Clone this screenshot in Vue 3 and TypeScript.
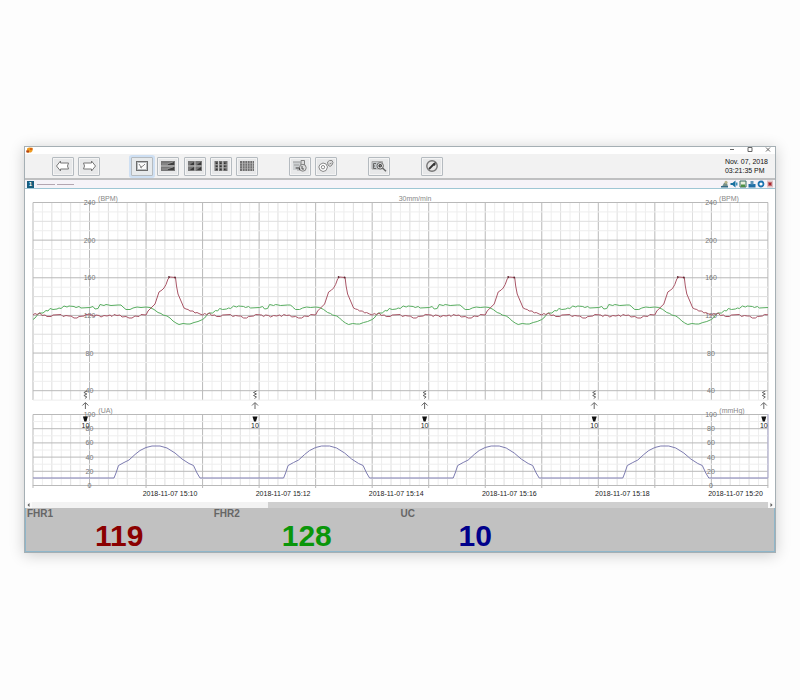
<script setup lang="ts">
type Point = [number, number]

const PERIOD = 169.6
const LEFT = 33
const RIGHT = 768
const MAJOR = 56.53

const tools = [
  { id: 'prev', label: 'Previous page', slot: 1 },
  { id: 'next', label: 'Next page', slot: 2 },
  { id: 'single', label: 'Single view', slot: 4 },
  { id: 'rows', label: 'Two views', slot: 5 },
  { id: 'quad', label: 'Four views', slot: 6 },
  { id: 'grid9', label: 'Nine views', slot: 7 },
  { id: 'grid16', label: 'Sixteen views', slot: 8 },
  { id: 'patient', label: 'Patients', slot: 10 },
  { id: 'settings', label: 'Settings', slot: 11 },
  { id: 'search', label: 'Search', slot: 13 },
  { id: 'tools', label: 'Service', slot: 15 },
]

const verticals = Array.from({ length: 79 }, (_, i) => ({
  x: LEFT + (i * MAJOR) / 6,
  kind: i % 6 === 0 ? 'major' : i % 2 === 0 ? 'mid' : 'minor',
})).filter((v) => v.x <= RIGHT + 1)
const majors = verticals.filter((v) => v.kind === 'major')

const fhrY = (v: number) => 202.5 + (240 - v) * 0.941
const ucY = (v: number) => 414.5 + (100 - v) * 0.71

const fhrLines = Array.from({ length: 22 }, (_, i) => 240 - i * 10).map((v) => ({
  y: fhrY(v),
  kind: v % 40 === 0 ? 'major' : v % 20 === 0 ? 'mid' : 'minor',
}))
const ucLines = Array.from({ length: 11 }, (_, i) => i * 10).map((v) => ({
  y: ucY(v),
  kind: v % 20 === 0 ? 'major' : 'minor',
}))

const fhrTicks = [240, 200, 160, 120, 80, 40]
const ucTicks = [100, 80, 60, 40, 20, 0]
const axes = [89.5, 711]
const times = ['15:10', '15:12', '15:14', '15:16', '15:18', '15:20']
const markers = [0, 1, 2, 3, 4].map((i) => 85.4 + i * PERIOD)

// One contraction cycle per array: x is the offset in the cycle, y the plot position.
const fhr1: Point[] = [
  [0, 315], [2, 313.5], [4, 314.5], [7, 313], [9, 315.5], [12, 315], [14, 316.5], [18, 316.5], [20, 315],
  [28, 314.5], [30, 316.5], [33, 315.5], [36, 316], [38, 316], [41, 318], [44, 318], [46, 316.5], [51, 316],
  [53, 314.5], [59, 315], [61, 316.5], [63, 315], [66, 315.5], [68, 317], [71, 315.5], [74, 316], [77, 315],
  [79, 316.5], [81, 314.5], [84, 315.5], [87, 315], [89, 317], [93, 316.5], [96, 318], [99, 318], [102, 316],
  [106, 316.5], [108, 314.5], [113, 315], [115, 311], [118, 308], [122, 304], [124, 298], [126, 292], [129, 290],
  [131, 288], [133, 284.5], [135, 279], [137, 277], [142.5, 277.5], [143.5, 286], [145, 294], [148, 301],
  [151, 308], [153, 309], [155, 309.5], [157, 311], [160, 311], [162, 313], [164, 312.5], [167, 314], [169.6, 315],
]
const fhr2: Point[] = [
  [0, 319.5], [2, 318], [4, 315.5], [6, 313], [10, 313], [13, 310.5], [15, 311], [17, 308.5], [20, 309.5],
  [24, 309], [26, 308], [28, 308.5], [31, 306], [34, 307], [36, 306], [41, 306.5], [43, 307.5], [46, 306.5],
  [48, 308], [57, 307.5], [60, 306.5], [62, 309], [65, 308.5], [67, 304.5], [71, 305.5], [73, 304.5], [78, 305.5],
  [85, 305], [88, 305], [90, 307], [93, 309.5], [97, 309.5], [100, 308], [104, 307], [108, 307.5], [113, 307],
  [117, 307.5], [121, 309.5], [125, 312.5], [128, 313.5], [130, 315], [134, 316], [137, 318], [140, 321],
  [143, 323], [146, 324.5], [150, 323.5], [154, 324], [157, 324], [161, 322.5], [165, 321.5], [169.6, 319.5],
]
const uc: Point[] = [
  [0, 478], [81, 478], [83, 473], [85.5, 465.5], [91, 462.5], [96, 460], [102, 454.5], [107, 450.5],
  [113, 447.5], [119, 446], [127, 446], [134, 448], [142, 453], [149, 459], [156, 463.5], [160.5, 465.5],
  [164, 473], [167, 478], [169.6, 478],
]

// Repeats a cycle across the plot and ends exactly on its right edge.
function trace(cycle: Point[]): string {
  const out: string[] = []
  let last: Point = [LEFT, cycle[0][1]]
  for (let n = 0; n < 5; n++) {
    for (const [dx, y] of cycle) {
      const x = LEFT + n * PERIOD + dx
      if (x > RIGHT) {
        const share = (RIGHT - last[0]) / (x - last[0])
        out.push(`${RIGHT},${(last[1] + (y - last[1]) * share).toFixed(1)}`)
        return out.join(' ')
      }
      out.push(`${x.toFixed(1)},${y}`)
      last = [x, y]
    }
  }
  return out.join(' ')
}

const readings = [
  { name: 'FHR1', value: 119, tone: 'red' },
  { name: 'FHR2', value: 128, tone: 'green' },
  { name: 'UC', value: 10, tone: 'blue' },
]
</script>

<template>
  <main class="page">
    <section class="window">
      <header class="titlebar">
        <svg class="logo" viewBox="0 0 7 6"><path d="M1 1.500 3 .5l3.500.3V4L5 5.500H1Z" fill="#ee9a20" /><path d="M0 3.500h3v2H.5Z" fill="#b34112" /><path d="M4 1h2.500v2H4Z" fill="#d86613" /></svg>
        <div class="controls">
          <button aria-label="Minimize"><svg viewBox="0 0 6 6"><path d="M1 2.500h4" /></svg></button>
          <button aria-label="Maximize"><svg viewBox="0 0 6 6"><path d="M1 .5h4v4H1Z" /></svg></button>
          <button aria-label="Close"><svg viewBox="0 0 6 6"><path d="m1 .5 4 4M5 .5l-4 4" /></svg></button>
        </div>
      </header>

      <div class="toolbar">
        <nav class="tools">
          <button v-for="t in tools" :key="t.id" class="tool" :class="[`slot-${t.slot}`, { active: t.id === 'single' }]" :aria-label="t.label">
            <svg viewBox="0 0 16 12">
              <path v-if="t.id === 'prev'" d="M1.500 6 5.500 1v2h8l-1 3 1 3h-8v2Z" fill="#fff" stroke="#777" />
              <path v-else-if="t.id === 'next'" d="M14.500 6 10.500 1v2h-8l1 3-1 3h8v2Z" fill="#fff" stroke="#777" />
              <g v-else-if="t.id === 'single'" fill="none" stroke="#6d6d6d">
                <rect x="2.500" y="1.500" width="11" height="9" fill="#b9bdbf" />
                <rect x="4" y="3" width="8" height="6" fill="#fafafa" stroke="none" />
                <path d="m5 4 2 3 2-1 2-2M6 7l2 1" stroke-width=".8" />
              </g>
              <g v-else-if="t.id === 'rows'">
                <path d="M1 1h14v10H1Z" fill="#777" /><path d="M1 6h14" stroke="#ddd" stroke-width=".8" />
                <path d="m8 4 6-2v3H8ZM8 9l6-2v3H8Z" fill="#3f3f3f" /><path d="M2 4h5l6-2M2 9h5l6-2" fill="none" stroke="#aaa" stroke-width=".6" />
              </g>
              <g v-else-if="t.id === 'quad'">
                <path d="M1 1h14v10H1Z" fill="#777" />
                <path d="m4 4 3-2v3H3ZM11 4l3-2v3h-4ZM4 9l3-2v3H3ZM11 9l3-2v3h-4Z" fill="#383838" />
                <path d="M8 1v10M1 6h14" stroke="#ccc" stroke-width=".8" />
              </g>
              <g v-else-if="t.id === 'grid9'">
                <path d="M1.500 1h13v10h-13Z" fill="#707070" />
                <path d="M3 2.500h1.500v1.500H3ZM7 2.500h1.500v1.500H7ZM11 2.500h1.500v1.500H11ZM3 5.500h1.500V7H3ZM7 5.500h1.500V7H7ZM11 5.500h1.500V7H11ZM3 8.500h1.500V10H3ZM7 8.500h1.500V10H7ZM11 8.500h1.500V10H11Z" fill="#333" />
                <path d="M5.500 1v10M9.800 1v10" stroke="#ddd" stroke-width=".9" /><path d="M1.500 4.700h13M1.500 7.800h13" stroke="#bbb" stroke-width=".6" />
              </g>
              <g v-else-if="t.id === 'grid16'">
                <path d="M1 1h14v10H1Z" fill="#707070" />
                <path d="M3.500 1v10M6 1v10M8.500 1v10M11 1v10M13.500 1v10" stroke="#ccc" stroke-width=".7" /><path d="M1 3.500h14M1 6h14M1 8.500h14" stroke="#b5b5b5" stroke-width=".5" />
              </g>
              <g v-else-if="t.id === 'patient'" fill="#ddd" stroke="#777" stroke-width=".9">
                <path d="M1 1.500h8V10H1Z" fill="#cdd0d2" stroke="none" /><path d="M1 2h7M2 5h5M3 8h5M5 10h3" stroke="#999" />
                <path d="M9 .5h3.500V5H9Z" /><circle cx="10.800" cy="7.800" r="3.400" /><path d="M4 8h3.500v2M10 6v3h2" fill="none" stroke="#444" />
              </g>
              <g v-else-if="t.id === 'settings'" fill="#fff" stroke="#888">
                <path d="m2 4.500 3-1.500 3 1 1.500 3L8 10.500l-3 1-3-1.500L.8 7Z" /><circle cx="5" cy="7.200" r="1.700" />
                <path d="m9.500 2 2-1.500h2.500l1 2-1 2.500-2 1.500-2-1.500Z" fill="#ddd" /><path d="m11.500 4 2-1" />
              </g>
              <g v-else-if="t.id === 'search'" fill="none" stroke="#666">
                <path d="M1 1.500h10.500V9H1Z" fill="#c2c6c8" stroke="#aaa" /><path d="M5 3.500H2.500v5H5M2.500 6H4" />
                <circle cx="9.200" cy="5.800" r="3.200" fill="#eee" /><circle cx="9.200" cy="5.800" r="1.200" stroke="#333" stroke-width="1.200" /><path d="m11.500 8 3.500 3.300" stroke-width="1.500" />
              </g>
              <g v-else fill="none" stroke="#666">
                <circle cx="8" cy="6" r="5.200" fill="#e6e6e6" stroke="#777" stroke-width="1.400" /><path d="m5 9 5-5" stroke="#333" stroke-width="1.800" /><path d="M9 3.500 11.500 2v3L10 6Z" fill="#333" stroke="none" />
              </g>
            </svg>
          </button>
        </nav>
        <time class="clock" datetime="2018-11-07T15:21:35"><span>Nov. 07, 2018</span><span>03:21:35 PM</span></time>
      </div>

      <div class="bedbar">
        <span class="bed">1</span>
        <span class="mask"></span><span class="mask short"></span>
        <div class="actions">
          <button aria-label="Patient"><svg viewBox="0 0 8 8"><path d="M1 6.500 3 3h3l1 3.500Z" fill="#78908a" /><circle cx="5" cy="2.200" r="1.500" fill="#b9b48a" /><path d="M0 6h7v1.500H0Z" fill="#376d87" /></svg></button>
          <button aria-label="Sound"><svg viewBox="0 0 8 8"><path d="M.5 3h2L5.500.5v7L2.500 5h-2Z" fill="#17719f" /><path d="M6 2.500h1.500v3H6Z" fill="#3c8fb7" /></svg></button>
          <button aria-label="Save"><svg viewBox="0 0 8 8"><path d="M1 1h6v6H1Z" fill="#e8efdc" stroke="#386f65" /><path d="M2 4.500h4V7H2Z" fill="#4b8f45" /></svg></button>
          <button aria-label="Print"><svg viewBox="0 0 8 8"><path d="M.5 4h7v3.500h-7Z" fill="#1f6fa6" /><path d="M2.500 1h3v3.500h-3Z" fill="#5a94b8" /></svg></button>
          <button aria-label="Options"><svg viewBox="0 0 8 8"><circle cx="4" cy="4" r="2.500" fill="#fff" stroke="#1c74b0" stroke-width="1.800" /></svg></button>
          <button aria-label="Close bed"><svg viewBox="0 0 8 8"><path d="M1 .5h6v7H1Z" fill="#dfc3c4" /><path d="m2.500 2.500 3 3M5.500 2.500l-3 3" stroke="#a8222a" stroke-width="1.500" /></svg></button>
        </div>
      </div>

      <svg class="chart" viewBox="25 189 750 313" role="img" aria-label="Fetal heart rate and uterine activity">
        <g>
          <line v-for="v in verticals" :key="`f${v.x}`" :class="v.kind" :x1="v.x" :x2="v.x" y1="202.500" y2="400" />
          <line v-for="l in fhrLines" :key="`fh${l.y}`" :class="l.kind" :x1="LEFT" :x2="RIGHT" :y1="l.y" :y2="l.y" />
          <line v-for="v in verticals" :key="`u${v.x}`" :class="v.kind" :x1="v.x" :x2="v.x" y1="414.500" y2="485.500" />
          <line v-for="v in majors" :key="`t${v.x}`" class="major" :x1="v.x" :x2="v.x" y1="485" y2="488" />
          <line v-for="l in ucLines" :key="`uh${l.y}`" :class="l.kind" :x1="LEFT" :x2="RIGHT" :y1="l.y" :y2="l.y" />
        </g>

        <g class="tick">
          <template v-for="x in axes" :key="x">
            <text v-for="v in fhrTicks" :key="`f${v}`" :x="x" :y="fhrY(v) + 2.500">{{ v }}</text>
            <text v-for="v in ucTicks" :key="`u${v}`" :x="x" :y="ucY(v) + 2.500">{{ v }}</text>
          </template>
        </g>
        <g class="unit">
          <text x="108" y="201">(BPM)</text>
          <text x="415" y="201">30mm/min</text>
          <text x="729" y="201">(BPM)</text>
          <text x="105.500" y="413">(UA)</text>
          <text x="732" y="413">(mmHg)</text>
        </g>

        <polyline class="line green" :points="trace(fhr2)" />
        <polyline class="line red" :points="trace(fhr1)" />
        <g v-for="n in 4" :key="n" class="dots">
          <circle :cx="LEFT + (n - 1) * PERIOD + 136" cy="277" r="0.900" />
          <circle :cx="LEFT + (n - 1) * PERIOD + 142" cy="277.500" r="0.900" />
        </g>
        <polyline class="line blue" :points="trace(uc)" />
        <line class="cursor" :x1="RIGHT" :x2="RIGHT" y1="414" y2="478" />

        <g v-for="x in markers" :key="x" class="marker">
          <path :d="`M${x + 1.500} 391l-3 1.500 3 1.500-3 1.500 3 1.500-2 1.500M${x} 409v-6M${x - 3} 405.500l3-3 3 3`" />
          <path class="solid" :d="`M${x - 2.500} 416.500h5l-1.500 5h-2Z`" />
          <text :x="x" y="427.500">10</text>
        </g>
        <g class="time">
          <text v-for="(t, i) in times" :key="t" :x="170 + i * 113.100" y="495.500">2018-11-07 {{ t }}</text>
        </g>
      </svg>

      <div class="scrollbar">
        <button aria-label="Scroll left"><svg viewBox="0 0 6 6"><path d="M4 1v4L2 3Z" /></svg></button>
        <div class="track"><div class="thumb"></div></div>
        <button aria-label="Scroll right"><svg viewBox="0 0 6 6"><path d="M2 1v4l2-2Z" /></svg></button>
      </div>

      <footer class="readings">
        <div v-for="r in readings" :key="r.name" class="reading" :class="r.tone">
          <span class="name">{{ r.name }}</span>
          <strong class="value">{{ r.value }}</strong>
        </div>
      </footer>
    </section>
  </main>
</template>

<style>
body {
  margin: 0;
  background: #fdfdfd;
}
</style>

<style scoped>
.page {
  padding: 146px 24px;
  font-family: "Liberation Sans", Arial, sans-serif;
}
button {
  display: flex;
  align-items: center;
  justify-content: center;
  margin: 0;
  padding: 0;
  border: 0;
  background: none;
}
.window {
  border: 1px solid #a5afb4;
  background: #fff;
  box-shadow: 0 2px 14px rgba(0, 0, 0, 0.2);
}
.titlebar {
  display: flex;
  align-items: flex-start;
  justify-content: space-between;
  height: 7px;
}
.logo {
  width: 7px;
  height: 6px;
  margin-left: 1px;
}
.controls {
  display: flex;
  gap: 12px;
  padding-right: 4px;
}
.controls svg {
  display: block;
  width: 6px;
  height: 6px;
  fill: none;
  stroke: #666;
}
.toolbar {
  display: flex;
  align-items: center;
  justify-content: space-between;
  height: 24px;
  border-bottom: 2px solid #bfc0c1;
  background: #f2f2f2;
}
.tools {
  display: grid;
  grid-template-columns: repeat(15, 1fr);
  flex: 0 0 395px;
  margin-left: 25px;
}
.tool {
  box-sizing: border-box;
  width: 22px;
  height: 19px;
  justify-self: center;
  border: 1px solid #b5bbc0;
  border-radius: 1px;
  background: #e7e8e9;
  box-shadow: inset 0 0 0 1px #f4f4f4;
}
.tool svg {
  width: 16px;
  height: 12px;
}
.tool.active {
  background: #e7eaec;
  box-shadow: 0 0 0 2px #cfe0f3;
}
.slot-1 { grid-column: 1; }
.slot-2 { grid-column: 2; }
.slot-4 { grid-column: 4; }
.slot-5 { grid-column: 5; }
.slot-6 { grid-column: 6; }
.slot-7 { grid-column: 7; }
.slot-8 { grid-column: 8; }
.slot-10 { grid-column: 10; }
.slot-11 { grid-column: 11; }
.slot-13 { grid-column: 13; }
.slot-15 { grid-column: 15; }
.clock {
  display: flex;
  flex-direction: column;
  padding-right: 7px;
  color: #111;
  font-size: 7px;
  line-height: 9px;
  white-space: nowrap;
}
.bedbar {
  display: flex;
  align-items: center;
  height: 8px;
  gap: 2px;
  padding-left: 2px;
  border-bottom: 1px solid #9fc6d4;
  background: #f6f3f8;
}
.bed {
  width: 7px;
  height: 7px;
  background: #175d7e;
  color: #fff;
  font-size: 6px;
  font-weight: 700;
  line-height: 7px;
  text-align: center;
}
.mask {
  width: 18px;
  height: 1px;
  margin-left: 1px;
  background: #b3a6b1;
}
.mask.short {
  width: 17px;
  margin-left: 0;
}
.actions {
  display: flex;
  gap: 1px;
  margin-left: auto;
  padding-right: 1px;
}
.actions svg {
  display: block;
  width: 8px;
  height: 8px;
}
.chart {
  display: block;
  width: 100%;
  height: auto;
}
.chart text {
  font-size: 7px;
  text-anchor: middle;
}
.major { stroke: #b9b9b9; stroke-width: 1; }
.mid { stroke: #dedede; stroke-width: 1; }
.minor { stroke: #eeeeee; stroke-width: 1; }
.tick { fill: #777; }
.unit { fill: #888; }
.time { fill: #222; }
.line {
  fill: none;
  stroke-width: 1;
  stroke-linejoin: round;
}
.line.red { stroke: #a95566; }
.line.green { stroke: #58ad60; }
.line.blue { stroke: #7c7bb0; }
.dots { fill: #5d2733; }
.cursor { stroke: #b5b3d8; }
.marker path {
  fill: none;
  stroke: #555;
  stroke-width: 0.9;
}
.marker .solid {
  fill: #111;
  stroke: none;
}
.marker text { fill: #222; }
.scrollbar {
  display: flex;
  height: 6px;
  background: #fafafa;
}
.scrollbar svg {
  display: block;
  width: 7px;
  height: 6px;
  fill: #555;
}
.track {
  flex: 1;
  background: #cfcfcf;
}
.thumb {
  width: 32%;
  height: 6px;
  background: #f3f3f3;
}
.readings {
  display: grid;
  grid-template-columns: repeat(4, 1fr);
  height: 43px;
  padding-left: 1px;
  border: 1px solid #8fb6c9;
  border-top: 0;
  background: #c1c1c1;
}
.reading {
  display: flex;
  flex-direction: column;
}
.name {
  color: #666;
  font-size: 10px;
  font-weight: 700;
  line-height: 11px;
}
.value {
  padding-left: 68px;
  font-size: 30px;
  line-height: 34px;
}
.reading.red .value { color: #8b0000; }
.reading.green .value { color: #0a960a; }
.reading.blue .value {
  padding-left: 58px;
  color: #00008b;
}
</style>
